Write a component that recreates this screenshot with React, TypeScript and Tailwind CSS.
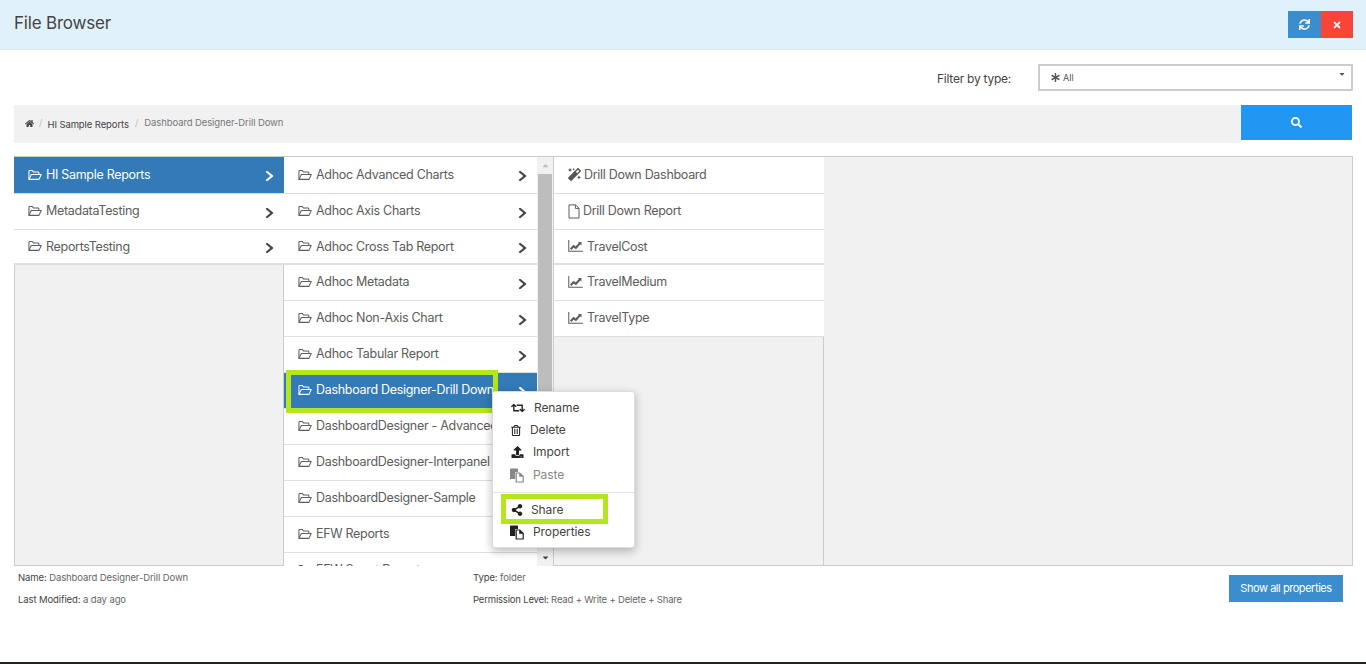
import React from "react";
import {
  FaAsterisk, FaChevronRight, FaHome, FaMagic, FaRegTrashAlt,
  FaRetweet, FaSearch, FaShareAlt, FaSync, FaTimes, FaUpload, FaCaretDown, FaCaretUp,
} from "react-icons/fa";

const col1 = ["HI Sample Reports", "MetadataTesting", "ReportsTesting"];
const col2 = [
  "Adhoc Advanced Charts", "Adhoc Axis Charts", "Adhoc Cross Tab Report", "Adhoc Metadata", "Adhoc Non-Axis Chart",
  "Adhoc Tabular Report", "Dashboard Designer-Drill Down", "DashboardDesigner - Advanced", "DashboardDesigner-Interpanel",
  "DashboardDesigner-Sample", "EFW Reports", "EFW Smart Reports",
];

function rowH(i: number) {
  if (i === 0) return "h-[37px] border-b";
  if (i === 2) return "h-[35px] border-b-2";
  return "h-[36px] border-b";
}
function textShift(i: number) {
  if (i === 0) return "";
  if (i === 2) return "mt-[1px]";
  return "-mt-px";
}

function FolderIcon() {
  return (
    <svg viewBox="0 0 15 12" className="w-[14px] h-[12px] shrink-0 mr-[4px] -mt-[1px]" fill="none" stroke="currentColor" strokeWidth="1.1">
      <path d="M1 10.5V2.2Q1 1.2 2 1.2H4.6L5.8 2.7H10.6Q11.6 2.7 11.6 3.7V5.2" />
      <path d="M1 10.7L3.6 5.4H14.2L11.8 10.7Z" strokeLinejoin="round" />
    </svg>
  );
}

function FileIcon() {
  return (
    <svg viewBox="0 0 12 15" className="w-[12px] h-[15px] mr-[3px] -mt-[1px]" fill="none" stroke="currentColor" strokeWidth="1">
      <path d="M1 .9H7.6L11 4.2V14H1Z" />
      <path d="M7.4 1V4.4H11" />
    </svg>
  );
}

function ChartIcon() {
  return (
    <svg viewBox="0 0 16 13" className="w-[15px] h-[12px] mr-[4px] -mt-[1px]" fill="none" stroke="currentColor">
      <path d="M.7 0V12.3H16" strokeWidth="1.1" />
      <path d="M2.8 10L6 6.6L8.4 8.4L13 3.4" strokeWidth="2.3" />
      <path d="M10.6 2.2H14.4V6Z" fill="currentColor" stroke="none" />
    </svg>
  );
}

function PasteIcon({ className }: { className: string }) {
  return (
    <svg viewBox="0 0 14 15" className={className} fill="currentColor">
      <path d="M0 1.2Q0 .5 .8 .5H7.2Q8 .5 8 1.2V4H5.2V11H0Z" />
      <path fillRule="evenodd" d="M5.6 4.4H10L13.8 8V14.6H5.6ZM6.8 5.6V13.4H12.6V8.8H9.2V5.6Z" />
    </svg>
  );
}

function FolderRow({ label, i, active }: { label: string; i: number; active: boolean }) {
  return (
    <div className={`${rowH(i)} shrink-0 flex items-center pl-[14px] pr-[10px] border-[#dedede] ${active ? "bg-[#337ab7] text-white" : "bg-white text-[#5c5c5c]"}`}>
      <FolderIcon />
      <span className={`flex-1 whitespace-nowrap overflow-hidden text-[12.5px] tracking-[-0.3px] ${textShift(i)}`}>{label}</span>
      <FaChevronRight preserveAspectRatio="none" className={`w-[9px] h-[12px] shrink-0 mt-[2px] ${active ? "text-white" : "text-[#444]"}`} />
    </div>
  );
}

function FileRow({ label, i, icon }: { label: string; i: number; icon: React.ReactNode }) {
  return (
    <div className={`${rowH(i)} shrink-0 flex items-center pl-[14px] bg-white text-[#5c5c5c] border-[#dedede] text-[12.5px] tracking-[-0.3px]`}>
      {icon}
      <span className={textShift(i)}>{label}</span>
    </div>
  );
}

function MenuItem({ icon, label, gap, muted }: { icon: React.ReactNode; label: string; gap: string; muted?: boolean }) {
  return (
    <div className={`h-[22px] flex items-center pl-[18px] text-[12px] tracking-[-0.1px] ${gap} ${muted ? "text-[#888]" : "text-[#444]"}`}>
      {icon}
      <span>{label}</span>
    </div>
  );
}

export default function App() {
  return (
    <div className="h-[664px] w-[1366px] flex flex-col bg-white overflow-hidden font-['Inter','Liberation_Sans',sans-serif] text-[#555]">
      <header className="h-[50px] shrink-0 bg-[#e1f1fa] border-b border-[#d9e6ee] flex items-center justify-between pl-[14px] pr-[13px]">
        <h1 className="text-[17px] text-[#444] font-normal tracking-[-0.2px] -mt-[2px]">File Browser</h1>
        <div className="flex">
          <button className="w-[33px] h-[27px] bg-[#3c8dcd] flex items-center justify-center text-white"><FaSync className="w-[11px] h-[11px]" /></button>
          <button className="w-[32px] h-[27px] bg-[#f94437] flex items-center justify-center text-white"><FaTimes className="w-[10px] h-[10px]" /></button>
        </div>
      </header>

      <div className="h-[55px] shrink-0 flex items-start justify-end pt-[14px] pr-[13px]">
        <span className="text-[12px] text-[#444] mr-[27px] mt-[6px] tracking-[-0.25px]">Filter by type:</span>
        <div className="w-[315px] h-[27px] border-2 border-[#ccc] flex items-center pl-[11px] pr-[5px] text-[#555]">
          <FaAsterisk className="w-[9px] h-[9px] mr-[3px]" />
          <span className="text-[9px] flex-1">All</span>
          <FaCaretDown className="w-[8px] h-[8px] self-start mt-[4px]" />
        </div>
      </div>

      <div className="flex items-start pl-[14px] pr-[14px] shrink-0">
        <nav className="flex-1 h-[38px] bg-[#f1f1f1] flex items-center pl-[11px] text-[9.5px]">
          <FaHome className="w-[9px] h-[9px] text-[#444] mb-[2px]" />
          <span className="text-[#bbb] mx-[5px] mb-[2px]">/</span>
          <span className="text-[#444] mt-[2px] tracking-[-0.1px]">HI Sample Reports</span>
          <span className="text-[#bbb] mx-[6px] mb-[2px]">/</span>
          <span className="text-[#777] mb-[1px] tracking-[-0.1px]">Dashboard Designer-Drill Down</span>
        </nav>
        <button className="w-[111px] h-[35px] bg-[#2196f3] flex items-center justify-center text-white"><FaSearch className="w-[11px] h-[11px]" /></button>
      </div>

      <div className="mt-[13px] mx-[14px] mr-[13px] h-[410px] shrink-0 border border-[#ccc] bg-[#f1f1f1] flex items-start relative">
        <div className="w-[270px] -ml-px h-[408px] flex flex-col shrink-0">
          {col1.map((c, i) => <FolderRow key={c} label={c} i={i} active={i === 0} />)}
          <div className="flex-1 border-r border-l border-[#ccc]" />
        </div>

        <div className="w-[269px] h-[409px] shrink-0 flex overflow-hidden">
          <div className="w-[253px] flex flex-col bg-white overflow-hidden">
            {col2.map((c, i) => <FolderRow key={c} label={c} i={i} active={i === 6} />)}
          </div>
          <div className="w-[16px] bg-[#f1f1f1] flex flex-col items-center text-[#888] relative">
            <FaCaretUp className="w-[9px] h-[9px] mt-[4px] text-[#bbb]" />
            <div className="w-[14px] h-[300px] bg-[#bdbdbd] mt-[4px]" />
            <FaCaretDown className="w-[9px] h-[9px] mt-auto mb-[4px] text-[#444]" />
          </div>
        </div>

        <div className="w-[271px] h-[408px] shrink-0 flex flex-col border-l border-[#ccc]">
          <FileRow label="Drill Down Dashboard" i={0} icon={<FaMagic className="w-[13px] h-[13px] mr-[3px] text-[#555] -mt-[1px]" />} />
          <FileRow label="Drill Down Report" i={1} icon={<FileIcon />} />
          <FileRow label="TravelCost" i={2} icon={<ChartIcon />} />
          <FileRow label="TravelMedium" i={3} icon={<ChartIcon />} />
          <FileRow label="TravelType" i={4} icon={<ChartIcon />} />
          <div className="flex-1 border-r border-[#ccc]" />
        </div>

        <div className="absolute left-[271px] top-[213px] w-[212px] h-[43px] border-[5px] border-[#b5e61d]" />

        <div className="absolute left-[477px] top-[234px] w-[143px] h-[157px] bg-white rounded-[3px] border border-[#dcdcdc] shadow-[0_3px_10px_rgba(0,0,0,0.28)] pt-[5px]">
          <MenuItem icon={<FaRetweet className="w-[14px] h-[12px] text-[#222]" />} label="Rename" gap="gap-[9px]" />
          <MenuItem icon={<FaRegTrashAlt className="w-[10px] h-[11px] text-[#222]" />} label="Delete" gap="gap-[9px]" />
          <MenuItem icon={<FaUpload className="w-[13px] h-[12px] text-[#222]" />} label="Import" gap="gap-[9px]" />
          <div className="mt-[1px]"><MenuItem icon={<PasteIcon className="w-[14px] h-[15px] -ml-[1px] text-[#888]" />} label="Paste" gap="gap-[9px]" muted /></div>
          <div className="h-px bg-[#e5e5e5] mt-[6px] mb-[6px]" />
          <MenuItem icon={<FaShareAlt className="w-[12px] h-[12px] text-[#222]" />} label="Share" gap="gap-[8px]" />
          <MenuItem icon={<PasteIcon className="w-[14px] h-[15px] -ml-[1px] text-[#222]" />} label="Properties" gap="gap-[9px]" />
        </div>

        <div className="absolute left-[486px] top-[337px] w-[107px] h-[30px] border-[5px] border-[#b5e61d]" />
      </div>

      <footer className="flex-1 flex items-start text-[9.5px] text-[#444] pl-[18px] pr-[23px] relative">
        <div className="w-[455px] pt-[6px] flex flex-col gap-[11px] leading-[11px]">
          <p className="tracking-[-0.1px]">Name: <span className="text-[#666]">Dashboard Designer-Drill Down</span></p>
          <p className="tracking-[-0.1px]">Last Modified: <span className="text-[#666]">a day ago</span></p>
        </div>
        <div className="flex-1 pt-[6px] flex flex-col gap-[11px] leading-[11px]">
          <p className="tracking-[-0.1px]">Type: <span className="text-[#666]">folder</span></p>
          <p className="tracking-[-0.18px]">Permission Level: <span className="text-[#666]">Read + Write + Delete + Share</span></p>
        </div>
        <button className="mt-[9px] w-[114px] h-[27px] bg-[#3c8dcd] text-white text-[11px] tracking-[-0.45px]">Show all properties</button>
      </footer>
      <div className="h-[2px] shrink-0 bg-[#26231a]" />
    </div>
  );
}
